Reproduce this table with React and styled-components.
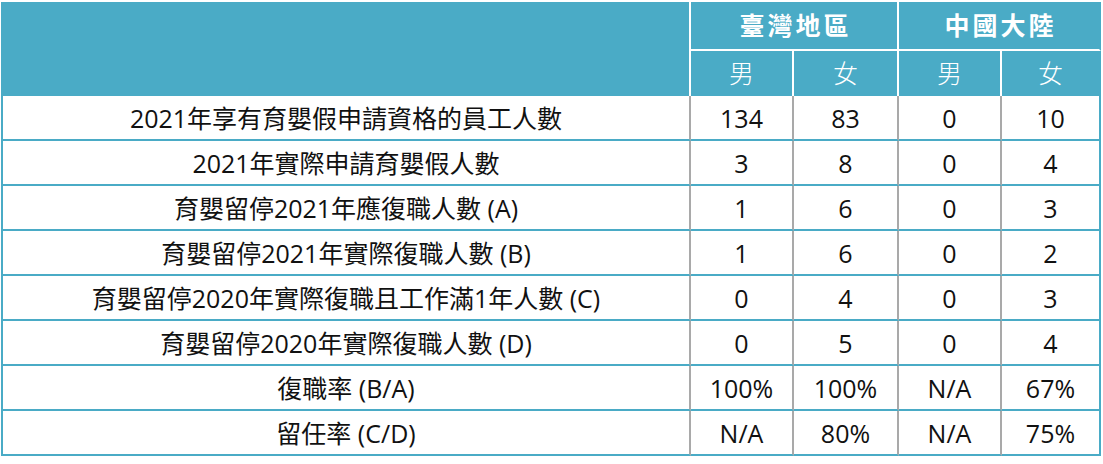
import React from "react";
import styled, { createGlobalStyle } from "styled-components";

const BLUE = "#4aabc6";
const GRAY = "#a9a9a9";

const Global = createGlobalStyle`
  html, body { margin: 0; padding: 0; background: #ffffff; }
  body { font-family: "Open Sans", "Noto Sans CJK TC", sans-serif; }
`;

const Grid = styled.div`
  display: grid;
  grid-template-columns: 688px 103px 105px 103px 99px;
  grid-template-rows: 49px 45px repeat(8, 45px);
  width: max-content;
  margin: 2px 0 0 1px;
  border-left: 2px solid ${BLUE};
  font-family: "Open Sans", "Noto Sans CJK TC", sans-serif;
  font-size: 25px;
  color: #111111;
`;

const Cell = styled.div`
  box-sizing: border-box;
  display: flex;
  align-items: center;
  justify-content: center;
  white-space: nowrap;
  line-height: 1;
`;

const CornerCell = styled(Cell)`
  grid-row: 1 / span 2;
  background: ${BLUE};
  border-right: 2px solid #ffffff;
`;

const GroupCell = styled(Cell)`
  grid-column: span 2;
  background: ${BLUE};
  color: #ffffff;
  font-weight: 700;
  letter-spacing: 3px;
  padding-left: 3px;
  border-bottom: 2px solid #ffffff;
  border-right: 2px solid ${(p) => (p.$last ? BLUE : "#ffffff")};
`;

const SexCell = styled(Cell)`
  background: ${BLUE};
  color: #ffffff;
  font-weight: 300;
  border-right: 2px solid ${(p) => (p.$last ? BLUE : "#ffffff")};
`;

const LabelCell = styled(Cell)`
  border-bottom: 2px solid ${BLUE};
  border-right: 2px solid ${GRAY};
  padding-top: 1px;
`;

const NumCell = styled(Cell)`
  border-bottom: 2px solid ${BLUE};
  border-right: 2px solid ${(p) => (p.$last ? BLUE : GRAY)};
  padding-top: 1px;
`;

const rows = [
  ["2021年享有育嬰假申請資格的員工人數", "134", "83", "0", "10"],
  ["2021年實際申請育嬰假人數", "3", "8", "0", "4"],
  ["育嬰留停2021年應復職人數 (A)", "1", "6", "0", "3"],
  ["育嬰留停2021年實際復職人數 (B)", "1", "6", "0", "2"],
  ["育嬰留停2020年實際復職且工作滿1年人數 (C)", "0", "4", "0", "3"],
  ["育嬰留停2020年實際復職人數 (D)", "0", "5", "0", "4"],
  ["復職率 (B/A)", "100%", "100%", "N/A", "67%"],
  ["留任率 (C/D)", "N/A", "80%", "N/A", "75%"],
];

export default function App() {
  return (
    <>
      <Global />
      <Grid>
        <CornerCell />
        <GroupCell>臺灣地區</GroupCell>
        <GroupCell $last>中國大陸</GroupCell>
        <SexCell>男</SexCell>
        <SexCell>女</SexCell>
        <SexCell>男</SexCell>
        <SexCell $last>女</SexCell>
        {rows.map((r, i) => (
          <React.Fragment key={i}>
            <LabelCell>{r[0]}</LabelCell>
            {r.slice(1).map((v, j) => (
              <NumCell key={j} $last={j === 3}>
                {v}
              </NumCell>
            ))}
          </React.Fragment>
        ))}
      </Grid>
    </>
  );
}
